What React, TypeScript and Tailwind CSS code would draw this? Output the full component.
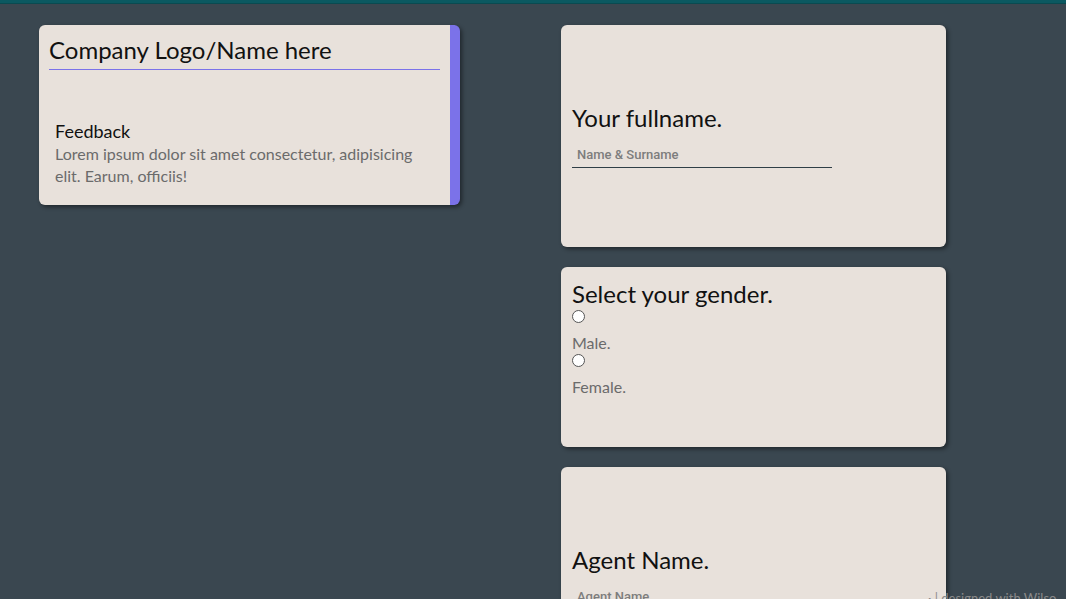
import React from "react";

const font = { fontFamily: "Lato, 'Noto Sans', sans-serif" };

function FieldCard({ title, placeholder }: { title: string; placeholder: string }) {
  return (
    <div className="h-[222px] w-[385px] rounded-md bg-[#e8e1db] px-[11px] shadow-[2px_2px_4px_rgba(0,0,0,0.45)] flex flex-col justify-center">
      <h2 className="text-[24px] leading-[28px] text-[#111]">{title}</h2>
      <input
        type="text"
        placeholder={placeholder}
        className="mt-[6px] h-[30px] w-[260px] border-b border-[#2f3e46] bg-transparent px-[5px] pt-[4px] text-[13px] font-medium text-[#333] outline-none placeholder:text-[#7d7d7d] font-['Roboto',sans-serif]"
      />
    </div>
  );
}

export default function App() {
  return (
    <div className="relative min-h-[599px] bg-[#3a4750] overflow-hidden" style={font}>
      <div className="h-[4px] bg-[#0b5961] border-b border-[#0a4a50]" />
      <div className="flex pt-[21px] pl-[39px]">
        <div className="w-[421px]">
          <div className="rounded-md bg-[#e8e1db] border-r-[10px] border-r-[#7b72e9] p-[10px] pb-[18px] shadow-[2px_2px_4px_rgba(0,0,0,0.45)]">
            <h1 className="pb-[4px] text-[24px] leading-[30px] text-[#111]">Company Logo/Name here</h1>
            <div className="h-px bg-[#7b72e9]" />
            <div className="mt-[49px] pl-[6px] pr-[25px]">
              <h3 className="text-[18px] leading-[24px] text-[#111]">Feedback</h3>
              <p className="text-[16px] leading-[22px] text-[#6b6b6b]">
                Lorem ipsum dolor sit amet consectetur, adipisicing elit. Earum, officiis!
              </p>
            </div>
          </div>
        </div>

        <div className="ml-[101px] flex flex-col gap-[20px]">
          <FieldCard title="Your fullname." placeholder="Name & Surname" />

          <div className="h-[180px] w-[385px] rounded-md bg-[#e8e1db] px-[11px] pt-[10px] shadow-[2px_2px_4px_rgba(0,0,0,0.45)]">
            <h2 className="text-[24px] leading-[33px] text-[#111]">Select your gender.</h2>
            <input
              type="radio"
              name="gender"
              className="block h-[13px] w-[13px] appearance-none rounded-full border border-[#555] bg-white"
            />
            <p className="mt-[8px] text-[16px] leading-[23px] text-[#6b6b6b]">Male.</p>
            <input
              type="radio"
              name="gender"
              className="block h-[13px] w-[13px] appearance-none rounded-full border border-[#555] bg-white"
            />
            <p className="mt-[8px] text-[16px] leading-[23px] text-[#6b6b6b]">Female.</p>
          </div>

          <FieldCard title="Agent Name." placeholder="Agent Name" />
        </div>
      </div>
      <div className="absolute left-[928px] top-[589px] text-[13px] text-[#8a8a8a] whitespace-nowrap">
        · | designed with Wilso
      </div>
    </div>
  );
}
